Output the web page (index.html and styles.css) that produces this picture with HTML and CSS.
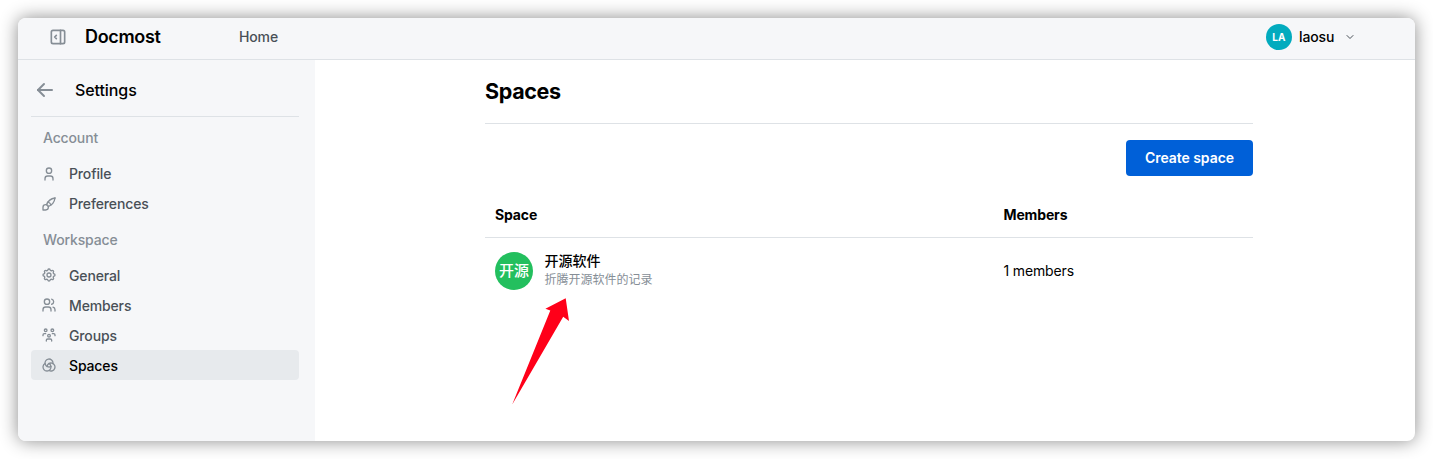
FILE: index.html
```html
<!DOCTYPE html>
<html lang="en">
<head>
<meta charset="utf-8">
<title>Docmost - Spaces</title>
<link rel="stylesheet" href="styles.css">
</head>
<body>
<div class="window">
  <header class="header">
    <svg class="icon toggle" viewBox="0 0 24 24"><path d="M4 6a2 2 0 0 1 2 -2h12a2 2 0 0 1 2 2v12a2 2 0 0 1 -2 2h-12a2 2 0 0 1 -2 -2z"/><path d="M15 4v16"/><path d="M10 10l-2 2l2 2"/></svg>
    <span class="brand">Docmost</span>
    <a class="home">Home</a>
    <div class="account">
      <span class="avatar">LA</span>
      <span class="username">laosu</span>
      <svg class="icon chevron" viewBox="0 0 24 24"><path d="M6 9l6 6l6 -6"/></svg>
    </div>
  </header>
  <div class="body">
    <nav class="sidebar">
      <div class="settings">
        <svg class="icon back" viewBox="0 0 24 24"><path d="M5 12h14"/><path d="M5 12l6 6"/><path d="M5 12l6 -6"/></svg>
        <span class="settings-title">Settings</span>
      </div>
      <div class="section">Account</div>
      <a class="item personal"><svg class="icon" viewBox="0 0 24 24"><path d="M8 7a4 4 0 1 0 8 0a4 4 0 0 0 -8 0"/><path d="M6 21v-2a4 4 0 0 1 4 -4h4a4 4 0 0 1 4 4v2"/></svg><span>Profile</span></a>
      <a class="item personal"><svg class="icon" viewBox="0 0 24 24"><path d="M3 21v-4a4 4 0 1 1 4 4h-4"/><path d="M21 3a16 16 0 0 0 -12.8 10.2"/><path d="M21 3a16 16 0 0 1 -10.2 12.8"/><path d="M10.6 9a9 9 0 0 1 4.4 4.4"/></svg><span>Preferences</span></a>
      <div class="section">Workspace</div>
      <a class="item"><svg class="icon" viewBox="0 0 24 24"><path d="M10.325 4.317c.426 -1.756 2.924 -1.756 3.35 0a1.724 1.724 0 0 0 2.573 1.066c1.543 -.94 3.31 .826 2.37 2.37a1.724 1.724 0 0 0 1.065 2.572c1.756 .426 1.756 2.924 0 3.35a1.724 1.724 0 0 0 -1.066 2.573c.94 1.543 -.826 3.31 -2.37 2.37a1.724 1.724 0 0 0 -2.572 1.065c-.426 1.756 -2.924 1.756 -3.35 0a1.724 1.724 0 0 0 -2.573 -1.066c-1.543 .94 -3.31 -.826 -2.37 -2.37a1.724 1.724 0 0 0 -1.065 -2.572c-1.756 -.426 -1.756 -2.924 0 -3.35a1.724 1.724 0 0 0 1.066 -2.573c-.94 -1.543 .826 -3.31 2.37 -2.37c1 .608 2.296 .07 2.572 -1.065z"/><path d="M9 12a3 3 0 1 0 6 0a3 3 0 0 0 -6 0"/></svg><span>General</span></a>
      <a class="item"><svg class="icon" viewBox="0 0 24 24"><path d="M5 7a4 4 0 1 0 8 0a4 4 0 1 0 -8 0"/><path d="M3 21v-2a4 4 0 0 1 4 -4h4a4 4 0 0 1 4 4v2"/><path d="M16 3.13a4 4 0 0 1 0 7.75"/><path d="M21 21v-2a4 4 0 0 0 -3 -3.85"/></svg><span>Members</span></a>
      <a class="item"><svg class="icon" viewBox="0 0 24 24"><path d="M10 13a2 2 0 1 0 4 0a2 2 0 0 0 -4 0"/><path d="M8 21v-1a2 2 0 0 1 2 -2h4a2 2 0 0 1 2 2v1"/><path d="M15 5a2 2 0 1 0 4 0a2 2 0 0 0 -4 0"/><path d="M17 10h2a2 2 0 0 1 2 2v1"/><path d="M5 5a2 2 0 1 0 4 0a2 2 0 0 0 -4 0"/><path d="M3 13v-1a2 2 0 0 1 2 -2h2"/></svg><span>Groups</span></a>
      <a class="item active"><svg class="icon" viewBox="0 0 24 24"><path d="M6.045 9.777a6 6 0 1 0 5.951 .023"/><path d="M11.997 20.196a6 6 0 1 0 -2.948 -5.97"/><path d="M17.95 9.785q .05 -.386 .05 -.785a6 6 0 1 0 -3.056 5.23"/></svg><span>Spaces</span></a>
    </nav>
    <main class="main">
      <h1 class="title">Spaces</h1>
      <div class="actions"><button class="create">Create space</button></div>
      <div class="row head"><span>Space</span><span>Members</span></div>
      <div class="row space">
        <div class="space-cell">
          <span class="space-avatar">开源</span>
          <div class="space-text">
            <div class="space-name">开源软件</div>
            <div class="space-desc">折腾开源软件的记录</div>
          </div>
        </div>
        <span class="count">1 members</span>
      </div>
    </main>
  </div>
</div>
<svg class="pointer" viewBox="0 0 58 108"><path d="M54.7 .3L34.4 10.7L39.3 12.5L1.2 106.5L52.2 18.7L58 23z"/></svg>
</body>
</html>
```
FILE: styles.css
```css
* { box-sizing: border-box; }
body {
  margin: 0;
  padding: 18px;
  height: 459px;
  overflow: hidden;
  background: #fff;
  color: #000;
  font: 500 14px/20px Inter, "Noto Sans CJK SC", sans-serif;
  letter-spacing: -.14px;
}
.window {
  width: 1397px;
  height: 423px;
  border-radius: 8px;
  overflow: hidden;
  background: #fff;
  box-shadow: 0 0 18px rgba(0, 0, 0, .46);
}
.icon {
  width: 16px;
  height: 16px;
  flex: none;
  fill: none;
  stroke: #868e96;
  stroke-width: 2;
  stroke-linecap: round;
  stroke-linejoin: round;
}
.header {
  display: flex;
  align-items: center;
  height: 42px;
  padding: 0 59px 4px 30px;
  background: #f6f7f9;
  border-bottom: 1px solid #dee2e6;
}
.header .toggle { width: 20px; height: 20px; }
.brand {
  width: 154px;
  margin-left: 17px;
  font-size: 18px;
  font-weight: 600;
  letter-spacing: -.34px;
}
.home { color: #495057; }
.account { display: flex; align-items: center; margin-left: auto; }
.avatar {
  width: 26px;
  height: 26px;
  border-radius: 50%;
  background: #02abbe;
  color: #fff;
  font-size: 10px;
  font-weight: 700;
  letter-spacing: .2px;
  line-height: 27px;
  text-align: center;
}
.username { width: 40px; margin: 0 5px 0 7px; }
.header .chevron { width: 12px; height: 12px; stroke: #495057; }
.body { display: flex; height: 381px; }
.sidebar { width: 297px; padding: 0 16px 0 13px; background: #f6f7f9; }
.settings {
  display: flex;
  align-items: center;
  gap: 18px;
  height: 57px;
  padding: 4px 0 0 2px;
  margin-bottom: 11px;
  border-bottom: 1px solid #dee2e6;
}
.settings .back { width: 24px; height: 24px; stroke-width: 2; }
.settings-title { font-size: 16px; letter-spacing: -.08px; }
.section { height: 20px; margin-bottom: 10px; padding-left: 12px; color: #868e96; }
.item {
  display: flex;
  align-items: center;
  gap: 12px;
  height: 30px;
  padding: 2px 0 0 10px;
  border-radius: 4px;
  color: #495057;
}
.item .icon { margin-bottom: 2px; }
.personal .icon { margin-bottom: 0; }
.item + .section { margin-top: 12px; }
.active { background: #e7eaed; color: #000; }
.main { width: 768px; margin-left: 170px; }
.title {
  height: 64px;
  margin: 0;
  padding-top: 16px;
  border-bottom: 1px solid #dee2e6;
  font-size: 21.5px;
  font-weight: 700;
  letter-spacing: -.35px;
  line-height: 30px;
}
.actions { display: flex; justify-content: flex-end; padding-top: 16px; }
.create {
  width: 127px;
  height: 36px;
  padding: 0;
  border: 0;
  border-radius: 4px;
  background: #0060d8;
  color: #fff;
  font: inherit;
  font-weight: 600;
  letter-spacing: -.05px;
}
.row { display: grid; grid-template-columns: 508.5px 1fr; align-items: center; padding-left: 10px; }
.head { height: 62px; padding-top: 17px; border-bottom: 1px solid #dee2e6; font-weight: 700; }
.space { height: 66px; font-weight: 400; }
.space-cell { display: flex; align-items: center; gap: 11.5px; letter-spacing: 0; }
.space-avatar {
  width: 38px;
  height: 38px;
  border-radius: 50%;
  background: #23bf5e;
  color: #fff;
  font-size: 15px;
  font-weight: 500;
  line-height: 37px;
  text-align: center;
}
.space-text { padding-bottom: 2px; }
.space-name { font-weight: 500; line-height: 20px; }
.space-desc { color: #868e96; font-size: 12px; line-height: 18px; }
.pointer { position: absolute; left: 511px; top: 298px; width: 58px; height: 108px; fill: #ff0019; }
```
